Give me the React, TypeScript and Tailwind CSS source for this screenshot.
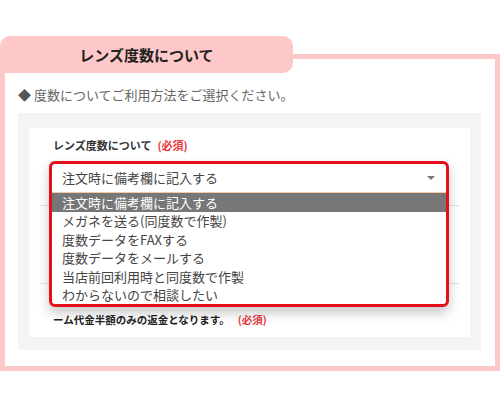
import React from "react";

const options = [
  "注文時に備考欄に記入する",
  "メガネを送る(同度数で作製)",
  "度数データをFAXする",
  "度数データをメールする",
  "当店前回利用時と同度数で作製",
  "わからないので相談したい",
];

export default function App() {
  return (
    <div
      className="w-[500px] h-[407px] bg-white pt-[36px] overflow-hidden"
      style={{ fontFamily: '"Noto Sans CJK JP", "Noto Sans", sans-serif' }}
    >
      <div className="flex h-[37px]">
        <div className="w-[293px] bg-[#ffc8c8] rounded-t-[10px] rounded-br-[10px] flex items-center justify-center text-[15px] font-bold text-[#222] leading-none">
          レンズ度数について
        </div>
        <div className="flex-1 mt-[18px] border-t-[5px] border-r-[5px] border-[#ffc8c8]" />
      </div>
      <div className="border-x-[5px] border-b-[5px] border-[#ffc8c8] pl-[13px] pr-[14px] pt-[12px] pb-[16px]">
        <div className="text-[13px] leading-[20px] text-[#666] whitespace-nowrap">
          <span className="text-[#555]">◆</span> 度数についてご利用方法をご選択ください。
        </div>
        <div className="mt-[8px] h-[237px] bg-[#f4f4f4] pt-[15px] pb-[13px] px-[11px]">
          <div className="h-full bg-white pt-[9px] pb-[8px]">
            <div className="pl-[24px] text-[11px] leading-[17px] font-bold text-[#333]">
              レンズ度数について<span className="ml-[6px] text-[#e8383d]">(必須)</span>
            </div>
            <div className="relative mt-[10px] ml-[23px] mr-[24px] h-[29px]">
              <div className="absolute -left-[3px] -right-[3px] -top-[3px] z-10 border-[3px] border-[#e50f1a] rounded-[6px] bg-white shadow-[0_6px_12px_rgba(0,0,0,0.22)] overflow-hidden">
                <div className="h-[29px] flex items-center justify-between pl-[10px] pr-[11px] border-b border-[#f6c9a6] text-[13px] text-[#444]">
                  <span>注文時に備考欄に記入する</span>
                  <svg width="8" height="4" viewBox="0 0 8 4">
                    <path d="M0 0 L8 0 L4 4 Z" fill="#777" />
                  </svg>
                </div>
                <ul>
                  {options.map((o, i) => (
                    <li
                      key={o}
                      className={
                        i === 0
                          ? "h-[18.5px] flex items-center pl-[10px] text-[13px] bg-[#777] text-white"
                          : "h-[18.5px] flex items-center pl-[10px] text-[13px] text-[#444]"
                      }
                    >
                      {o}
                    </li>
                  ))}
                </ul>
              </div>
            </div>
            <div className="mt-[12px] mx-[11px] border-t border-[#e2e2e2] h-[78px]" />
            <div className="mx-[11px] border-t border-[#e2e2e2] pt-[27px] pl-[13px] text-[10.5px] leading-[18px] font-bold text-[#222] whitespace-nowrap">
              <div>
                ーム代金半額のみの返金となります。
                <span className="ml-[8px] text-[#e8383d]">(必須)</span>
              </div>
            </div>
          </div>
        </div>
      </div>
    </div>
  );
}
